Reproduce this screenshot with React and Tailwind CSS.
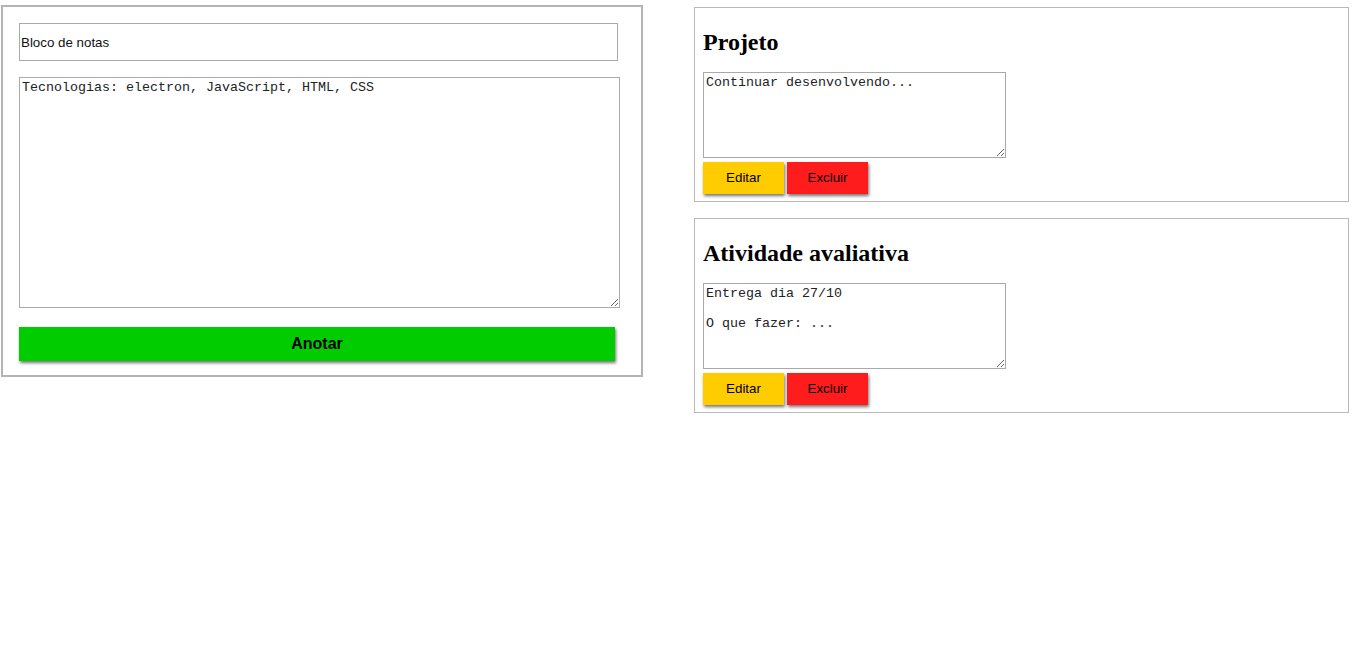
import React, { useState } from "react";

const notasIniciais = [
  { id: 1, titulo: "Projeto", texto: "Continuar desenvolvendo..." },
  { id: 2, titulo: "Atividade avaliativa", texto: "Entrega dia 27/10\n\nO que fazer: ..." },
];

function Nota({ nota }) {
  return (
    <div className="border border-[#b9b9b9] px-[8px] pb-[7px]">
      <h2 className="mt-[21px] mb-[16px] text-[24px] leading-[27px] font-bold font-['Liberation_Serif',serif] text-black">
        {nota.titulo}
      </h2>
      <textarea
        defaultValue={nota.texto}
        className="block w-[303px] h-[86px] border border-[#a9a9a9] p-[2px] text-[13.333px] leading-[15px] font-['Liberation_Mono',monospace] text-[#222] bg-white"
      />
      <div className="flex gap-[3px] mt-[4px]">
        <button className="w-[81px] h-[32px] bg-[#ffcc00] text-[13.333px] font-['Liberation_Sans',sans-serif] text-black shadow-[1px_2px_3px_rgba(0,0,0,0.55)] cursor-pointer">
          Editar
        </button>
        <button className="w-[81px] h-[32px] bg-[#ff1c1c] text-[13.333px] font-['Liberation_Sans',sans-serif] text-black shadow-[1px_2px_3px_rgba(0,0,0,0.55)] cursor-pointer">
          Excluir
        </button>
      </div>
    </div>
  );
}

export default function App() {
  const [titulo, setTitulo] = useState("Bloco de notas");
  const [texto, setTexto] = useState("Tecnologias: electron, JavaScript, HTML, CSS");

  return (
    <div className="min-h-screen bg-white flex items-start font-['Liberation_Sans',sans-serif]">
      {/* formulario */}
      <div className="ml-[1px] mt-[5px] w-[642px] border-2 border-[#b4b4b4] pt-[16px] pl-[16px] pb-[14px] flex flex-col">
        <input
          value={titulo}
          onChange={(e) => setTitulo(e.target.value)}
          className="w-[599px] h-[38px] border border-[#aaaaaa] px-[1px] text-[13.333px] text-[#111] outline-none"
        />
        <textarea
          value={texto}
          onChange={(e) => setTexto(e.target.value)}
          className="mt-[16px] w-[601px] h-[231px] border border-[#aaaaaa] p-[2px] text-[13.333px] leading-[15px] font-['Liberation_Mono',monospace] text-[#222]"
        />
        <button className="mt-[19px] w-[596px] h-[34px] bg-[#00cc00] text-[16px] font-bold text-black shadow-[1px_2px_3px_rgba(0,0,0,0.55)] cursor-pointer">
          Anotar
        </button>
      </div>

      {/* notas */}
      <div className="ml-[51px] mt-[7px] w-[655px] flex flex-col gap-[16px]">
        {notasIniciais.map((n) => (
          <Nota key={n.id} nota={n} />
        ))}
      </div>
    </div>
  );
}
